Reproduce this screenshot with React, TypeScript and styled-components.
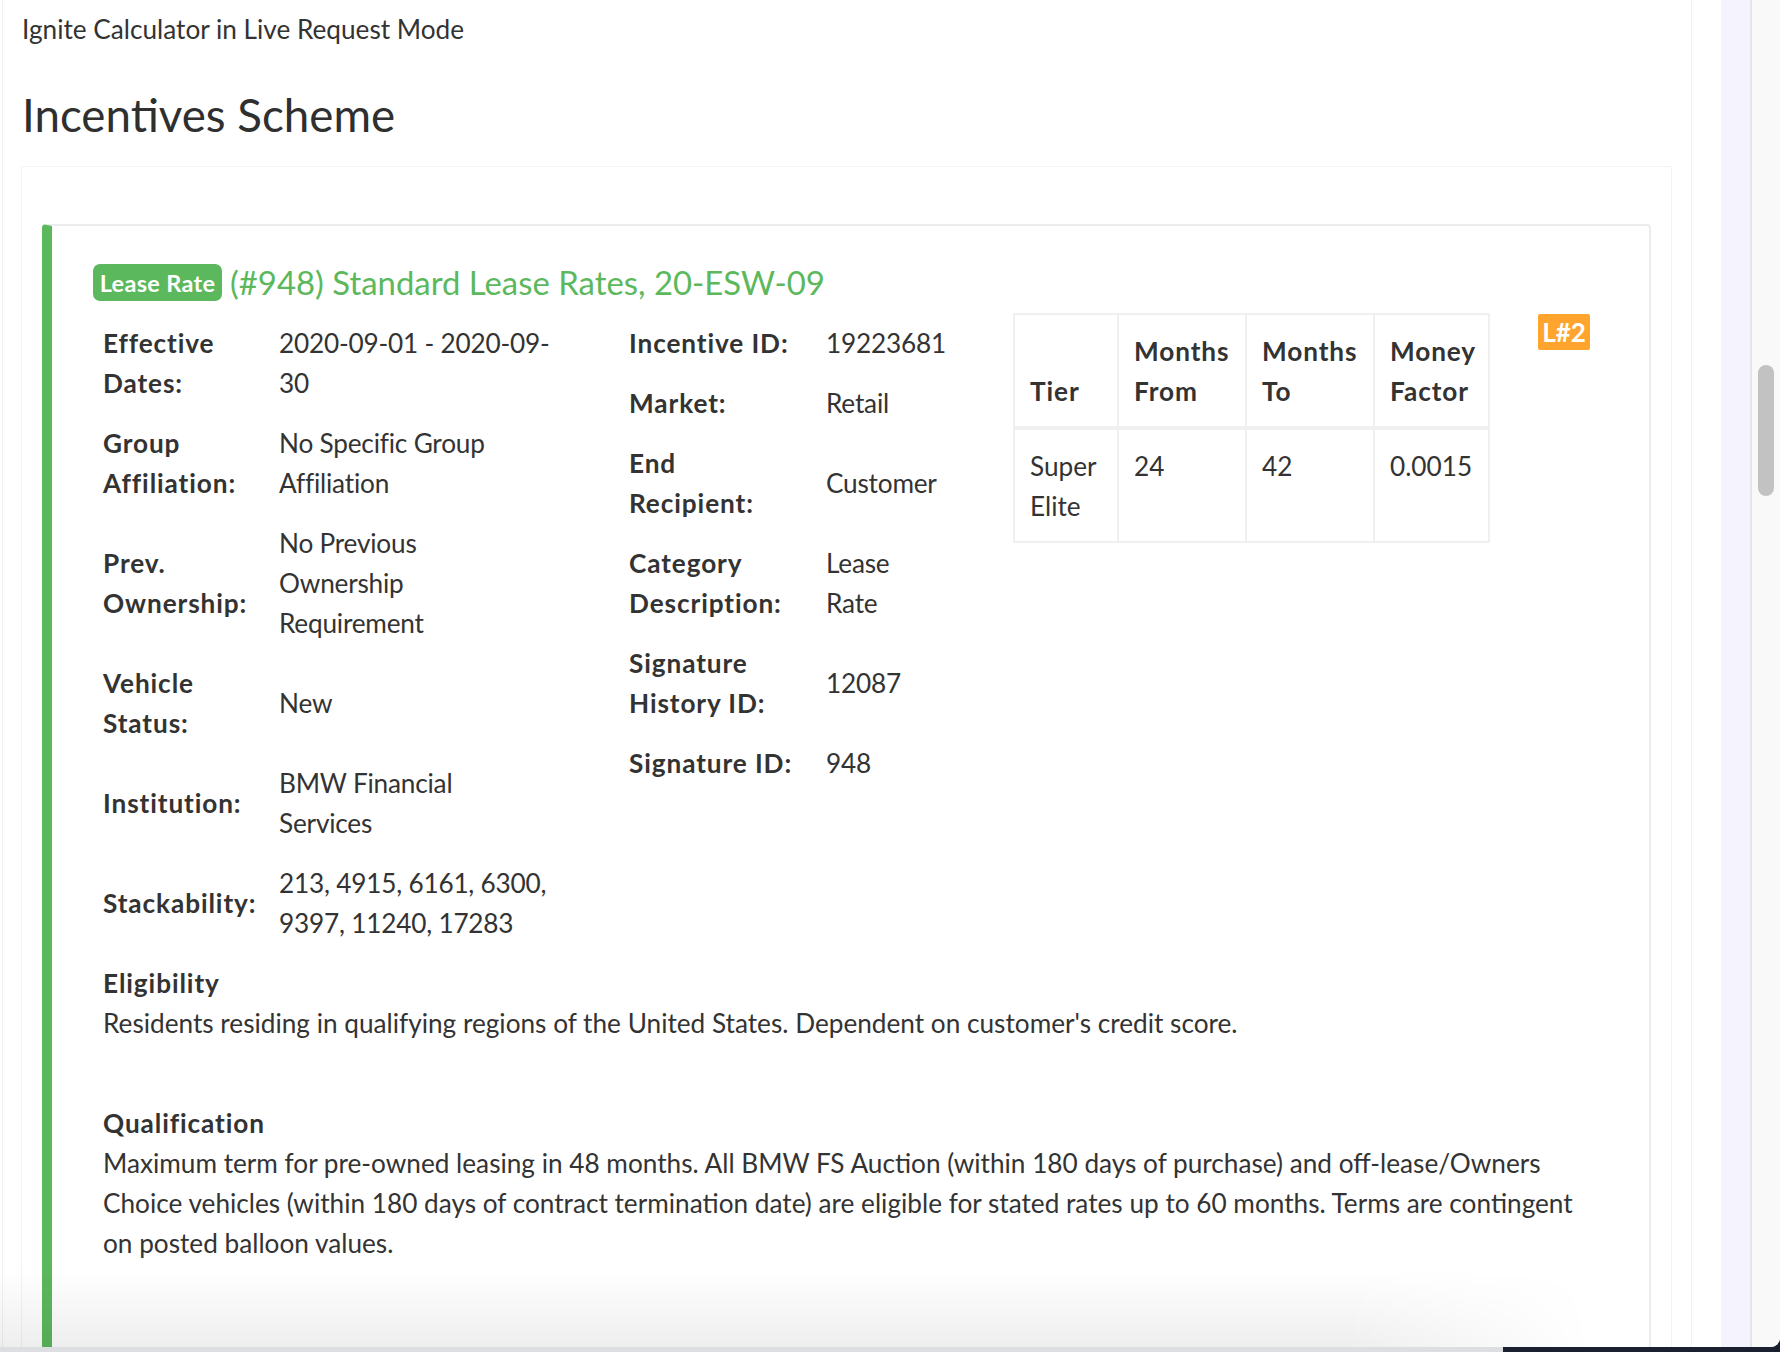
import React from "react";
import styled, { createGlobalStyle } from "styled-components";

const GlobalStyle = createGlobalStyle`
  html, body { margin: 0; padding: 0; background: #1b2030; }
  body { font-family: Lato, "Open Sans", sans-serif; color: #333333; }
  * { box-sizing: border-box; }
`;

const Screen = styled.div`
  width: 1780px;
  height: 1352px;
  position: relative;
  overflow: hidden;
  background: #1b2030;
  display: flex;
  flex-direction: column;
`;

const Window = styled.div`
  height: 1347px;
  flex: 0 0 1347px;
  background: #ffffff;
  border-bottom-right-radius: 9px;
  display: flex;
  overflow: hidden;
`;

const Dock = styled.div`
  height: 5px;
  display: flex;
`;

const DockShelf = styled.div`
  width: 1503px;
  background: #dddee2;
`;

const Main = styled.main`
  flex: 0 0 1690px;
  margin-left: 2px;
  border-left: 1px solid #f1f1f1;
  border-right: 1px solid #f1f1f1;
  padding: 9px 19px 0 18px;
  overflow: hidden;
`;

const Spacer = styled.div`
  flex: 0 0 29px;
`;

const SideStrip = styled.div`
  flex: 0 0 31px;
  background: #f5f3fd;
  border-right: 2px solid #e6e6e8;
`;

const ScrollTrack = styled.div`
  flex: 1;
  background: #f9f9f9;
  padding: 365px 6px 0 6px;
`;

const ScrollThumb = styled.div`
  width: 16px;
  height: 131px;
  border-radius: 8px;
  background: #c2c2c2;
`;

const TopNote = styled.div`
  font-size: 26.2px;
  line-height: 40px;
  padding-left: 1px;
`;

const PageTitle = styled.h2`
  margin: 38px 0 0 0;
  padding-left: 1px;
  font-weight: 400;
  font-size: 45.7px;
  line-height: 55px;
  color: #2f2f2f;
`;

const Panel = styled.section`
  margin-top: 24px;
  border: 1px solid #f3f3f3;
  border-bottom: none;
  padding: 57px 20px 0 20px;
`;

const Card = styled.article`
  border: 2px solid #ececec;
  border-left: 10px solid #5cb85c;
  border-radius: 4px;
  padding: 38px 40px 200px 41px;
`;

const HeaderRow = styled.div`
  display: flex;
  align-items: center;
  gap: 8px;
  height: 37px;
  margin-bottom: 12px;
`;

const TypeBadge = styled.span`
  display: inline-flex;
  align-items: center;
  justify-content: center;
  width: 129px;
  height: 37px;
  border-radius: 7px;
  background: #5cb85c;
  color: #ffffff;
  font-weight: 700;
  font-size: 23.5px;
  letter-spacing: 0.3px;
`;

const CardTitle = styled.h4`
  margin: 0;
  font-weight: 400;
  font-size: 32.9px;
  line-height: 37px;
  color: #5cb85c;
  white-space: nowrap;
`;

const DetailsRow = styled.div`
  display: flex;
  align-items: flex-start;
`;

const InfoGrid = styled.dl<{ $labelWidth: number; $width: number }>`
  margin: 0;
  width: ${(p) => p.$width}px;
  flex: 0 0 ${(p) => p.$width}px;
  display: grid;
  grid-template-columns: ${(p) => p.$labelWidth}px 1fr;
  align-items: center;
  font-size: 26.2px;
  line-height: 40px;
`;

const InfoLabel = styled.dt`
  padding: 10px;
  font-weight: 700;
  letter-spacing: 0.9px;
  white-space: nowrap;
`;

const InfoValue = styled.dd`
  margin: 0;
  padding: 10px;
  white-space: nowrap;
  letter-spacing: -0.2px;
`;

const Line = styled.span`
  display: block;
`;

const TierTable = styled.table`
  margin-left: 10px;
  border-collapse: collapse;
  font-size: 26.2px;
  line-height: 40px;
  table-layout: fixed;
  width: 475px;
`;

const TierHead = styled.th<{ $w: number }>`
  width: ${(p) => p.$w}px;
  text-align: left;
  vertical-align: bottom;
  font-weight: 700;
  letter-spacing: 0.9px;
  padding: 16px 15px 15px 15px;
  border: 2px solid #f0f0f0;
  border-bottom-width: 4px;
  white-space: nowrap;
`;

const TierCell = styled.td`
  vertical-align: top;
  padding: 16px 15px 15px 15px;
  border: 2px solid #f0f0f0;
  white-space: nowrap;
`;

const LevelBadge = styled.span`
  margin-left: 48px;
  margin-top: 1px;
  width: 52px;
  height: 36px;
  display: inline-flex;
  align-items: center;
  justify-content: center;
  background: #ffa42c;
  color: #ffffff;
  font-weight: 700;
  font-size: 26px;
  border-radius: 2px;
`;

const Section = styled.div<{ $gap: number }>`
  margin-top: ${(p) => p.$gap}px;
  padding: 0 10px;
  font-size: 26.2px;
  line-height: 40px;
`;

const SectionHeading = styled.div`
  font-weight: 700;
  letter-spacing: 0.9px;
`;

const SectionText = styled.p`
  margin: 0;
  white-space: nowrap;
`;

const BottomFade = styled.div`
  position: absolute;
  left: 0;
  bottom: 5px;
  width: 1640px;
  height: 78px;
  pointer-events: none;
  background: linear-gradient(to bottom, rgba(0, 0, 0, 0), rgba(0, 0, 0, 0.065));
  -webkit-mask-image: linear-gradient(to right, #000 0%, #000 82%, transparent 97%);
  mask-image: linear-gradient(to right, #000 0%, #000 82%, transparent 97%);
`;

type Info = { label: string[]; value: string[] };

const leftInfo: Info[] = [
  { label: ["Effective", "Dates:"], value: ["2020-09-01 - 2020-09-", "30"] },
  { label: ["Group", "Affiliation:"], value: ["No Specific Group", "Affiliation"] },
  { label: ["Prev.", "Ownership:"], value: ["No Previous", "Ownership", "Requirement"] },
  { label: ["Vehicle", "Status:"], value: ["New"] },
  { label: ["Institution:"], value: ["BMW Financial", "Services"] },
  { label: ["Stackability:"], value: ["213, 4915, 6161, 6300,", "9397, 11240, 17283"] },
];

const midInfo: Info[] = [
  { label: ["Incentive ID:"], value: ["19223681"] },
  { label: ["Market:"], value: ["Retail"] },
  { label: ["End", "Recipient:"], value: ["Customer"] },
  { label: ["Category", "Description:"], value: ["Lease", "Rate"] },
  { label: ["Signature", "History ID:"], value: ["12087"] },
  { label: ["Signature ID:"], value: ["948"] },
];

const tierHeads: { lines: string[]; w: number }[] = [
  { lines: ["Tier"], w: 104 },
  { lines: ["Months", "From"], w: 128 },
  { lines: ["Months", "To"], w: 128 },
  { lines: ["Money", "Factor"], w: 115 },
];

const tierRow: string[][] = [["Super", "Elite"], ["24"], ["42"], ["0.0015"]];

const Lines = ({ lines }: { lines: string[] }) => (
  <>
    {lines.map((l, i) => (
      <Line key={i}>{l}</Line>
    ))}
  </>
);

const InfoList = ({ items, labelWidth, width }: { items: Info[]; labelWidth: number; width: number }) => (
  <InfoGrid $labelWidth={labelWidth} $width={width}>
    {items.map((it, i) => (
      <React.Fragment key={i}>
        <InfoLabel>
          <Lines lines={it.label} />
        </InfoLabel>
        <InfoValue>
          <Lines lines={it.value} />
        </InfoValue>
      </React.Fragment>
    ))}
  </InfoGrid>
);

export default function App() {
  return (
    <Screen>
      <GlobalStyle />
      <Window>
        <Main>
          <TopNote>Ignite Calculator in Live Request Mode</TopNote>
          <PageTitle>Incentives Scheme</PageTitle>
          <Panel>
            <Card>
              <HeaderRow>
                <TypeBadge>Lease Rate</TypeBadge>
                <CardTitle>(#948) Standard Lease Rates, 20-ESW-09</CardTitle>
              </HeaderRow>
              <DetailsRow>
                <InfoList items={leftInfo} labelWidth={176} width={526} />
                <InfoList items={midInfo} labelWidth={197} width={384} />
                <TierTable>
                  <thead>
                    <tr>
                      {tierHeads.map((h, i) => (
                        <TierHead key={i} $w={h.w}>
                          <Lines lines={h.lines} />
                        </TierHead>
                      ))}
                    </tr>
                  </thead>
                  <tbody>
                    <tr>
                      {tierRow.map((c, i) => (
                        <TierCell key={i}>
                          <Lines lines={c} />
                        </TierCell>
                      ))}
                    </tr>
                  </tbody>
                </TierTable>
                <LevelBadge>L#2</LevelBadge>
              </DetailsRow>
              <Section $gap={10}>
                <SectionHeading>Eligibility</SectionHeading>
                <SectionText>
                  Residents residing in qualifying regions of the United States. Dependent on customer's credit score.
                </SectionText>
              </Section>
              <Section $gap={60}>
                <SectionHeading>Qualification</SectionHeading>
                <SectionText>
                  <Line>
                    Maximum term for pre-owned leasing in 48 months. All BMW FS Auction (within 180 days of purchase) and
                    off-lease/Owners
                  </Line>
                  <Line>
                    Choice vehicles (within 180 days of contract termination date) are eligible for stated rates up to 60
                    months. Terms are contingent
                  </Line>
                  <Line>on posted balloon values.</Line>
                </SectionText>
              </Section>
            </Card>
          </Panel>
        </Main>
        <Spacer />
        <SideStrip />
        <ScrollTrack>
          <ScrollThumb />
        </ScrollTrack>
      </Window>
      <Dock>
        <DockShelf />
      </Dock>
      <BottomFade />
    </Screen>
  );
}
